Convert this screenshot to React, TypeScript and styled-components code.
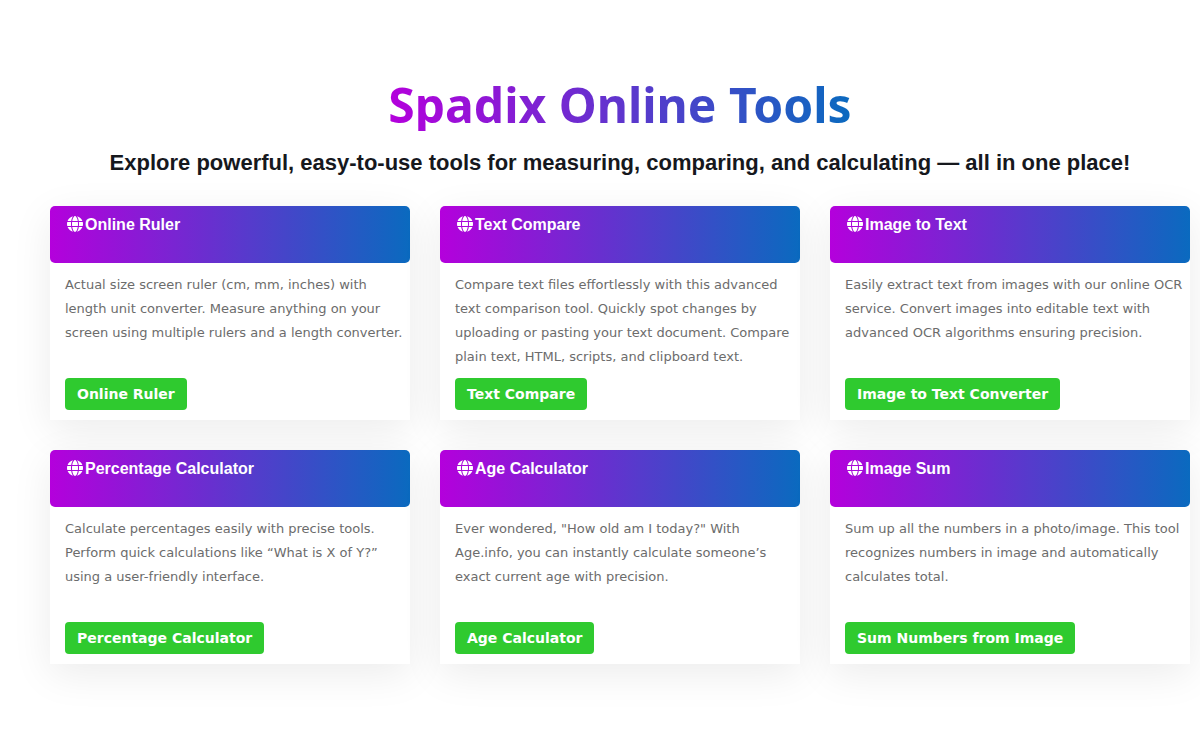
import React from "react";
import styled, { createGlobalStyle } from "styled-components";
import { FaGlobe } from "react-icons/fa6";

const brandGradient = "linear-gradient(90deg, #b400dc 0%, #0a6abf 100%)";

const GlobalStyle = createGlobalStyle`
  *, *::before, *::after { box-sizing: border-box; }
  body {
    margin: 0;
    background: #fff;
    color: #16181d;
    font-family: Verdana, "DejaVu Sans", sans-serif;
    overflow-x: hidden;
  }
`;

const Page = styled.main`
  padding: 79px 10px 75px 50px;
`;

const Intro = styled.header`
  display: flex;
  flex-direction: column;
  align-items: center;
  gap: 17px;
  margin-bottom: 28px;
  text-align: center;
`;

const Title = styled.h1`
  margin: 0;
  font: 700 48px/52px "Segoe UI", "Noto Sans", sans-serif;
  color: transparent;
  background: ${brandGradient};
  background-clip: text;
  -webkit-background-clip: text;
`;

const Tagline = styled.h2`
  margin: 0;
  font: 700 22px/30px Arial, "Liberation Sans", sans-serif;
`;

const ToolGrid = styled.section`
  display: grid;
  grid-template-columns: repeat(3, minmax(0, 1fr));
  gap: 30px;
`;

const Card = styled.article`
  display: flex;
  flex-direction: column;
  background: #fff;
  border-radius: 5px 5px 0 0;
  box-shadow: 0 10px 40px rgba(0, 0, 0, 0.08);
`;

const CardHeader = styled.div`
  display: flex;
  align-items: flex-start;
  gap: 2px;
  min-height: 57px;
  padding: 8px 17px;
  border-radius: 5px;
  color: #fff;
  background: ${brandGradient};
`;

const GlobeIcon = styled(FaGlobe)`
  width: 16px;
  height: 20px;
  flex: none;
`;

const CardTitle = styled.h3`
  margin: 0;
  font: 700 16px/22px Arial, "Liberation Sans", sans-serif;
`;

const CardBody = styled.div`
  display: flex;
  flex: 1;
  flex-direction: column;
  align-items: flex-start;
  gap: 9px;
  padding: 10px 3px 10px 15px;
`;

const Description = styled.p`
  flex: 1;
  min-height: 96px;
  margin: 0;
  color: #6c6c6c;
  font-size: 13px;
  line-height: 24px;
`;

const ToolLink = styled.a`
  padding: 0 12px;
  border-radius: 4px;
  background: #2fca2f;
  color: #fff;
  font-size: 14px;
  font-weight: 700;
  line-height: 32px;
  text-decoration: none;
  &:hover { background: #28b428; }
`;

interface Tool {
  name: string;
  description: string;
  action: string;
  href: string;
}

const tools: Tool[] = [
  {
    name: "Online Ruler",
    description:
      "Actual size screen ruler (cm, mm, inches) with length unit converter. Measure anything on your screen using multiple rulers and a length converter.",
    action: "Online Ruler",
    href: "#online-ruler",
  },
  {
    name: "Text Compare",
    description:
      "Compare text files effortlessly with this advanced text comparison tool. Quickly spot changes by uploading or pasting your text document. Compare plain text, HTML, scripts, and clipboard text.",
    action: "Text Compare",
    href: "#text-compare",
  },
  {
    name: "Image to Text",
    description:
      "Easily extract text from images with our online OCR service. Convert images into editable text with advanced OCR algorithms ensuring precision.",
    action: "Image to Text Converter",
    href: "#image-to-text",
  },
  {
    name: "Percentage Calculator",
    description:
      "Calculate percentages easily with precise tools. Perform quick calculations like “What is X of Y?” using a user-friendly interface.",
    action: "Percentage Calculator",
    href: "#percentage-calculator",
  },
  {
    name: "Age Calculator",
    description:
      "Ever wondered, \"How old am I today?\" With Age.info, you can instantly calculate someone’s exact current age with precision.",
    action: "Age Calculator",
    href: "#age-calculator",
  },
  {
    name: "Image Sum",
    description:
      "Sum up all the numbers in a photo/image. This tool recognizes numbers in image and automatically calculates total.",
    action: "Sum Numbers from Image",
    href: "#image-sum",
  },
];

export default function App() {
  return (
    <>
      <GlobalStyle />
      <Page>
        <Intro>
          <Title>Spadix Online Tools</Title>
          <Tagline>
            Explore powerful, easy-to-use tools for measuring, comparing, and calculating — all in one place!
          </Tagline>
        </Intro>
        <ToolGrid>
          {tools.map((tool) => (
            <Card key={tool.name}>
              <CardHeader>
                <GlobeIcon aria-hidden />
                <CardTitle>{tool.name}</CardTitle>
              </CardHeader>
              <CardBody>
                <Description>{tool.description}</Description>
                <ToolLink href={tool.href}>{tool.action}</ToolLink>
              </CardBody>
            </Card>
          ))}
        </ToolGrid>
      </Page>
    </>
  );
}
